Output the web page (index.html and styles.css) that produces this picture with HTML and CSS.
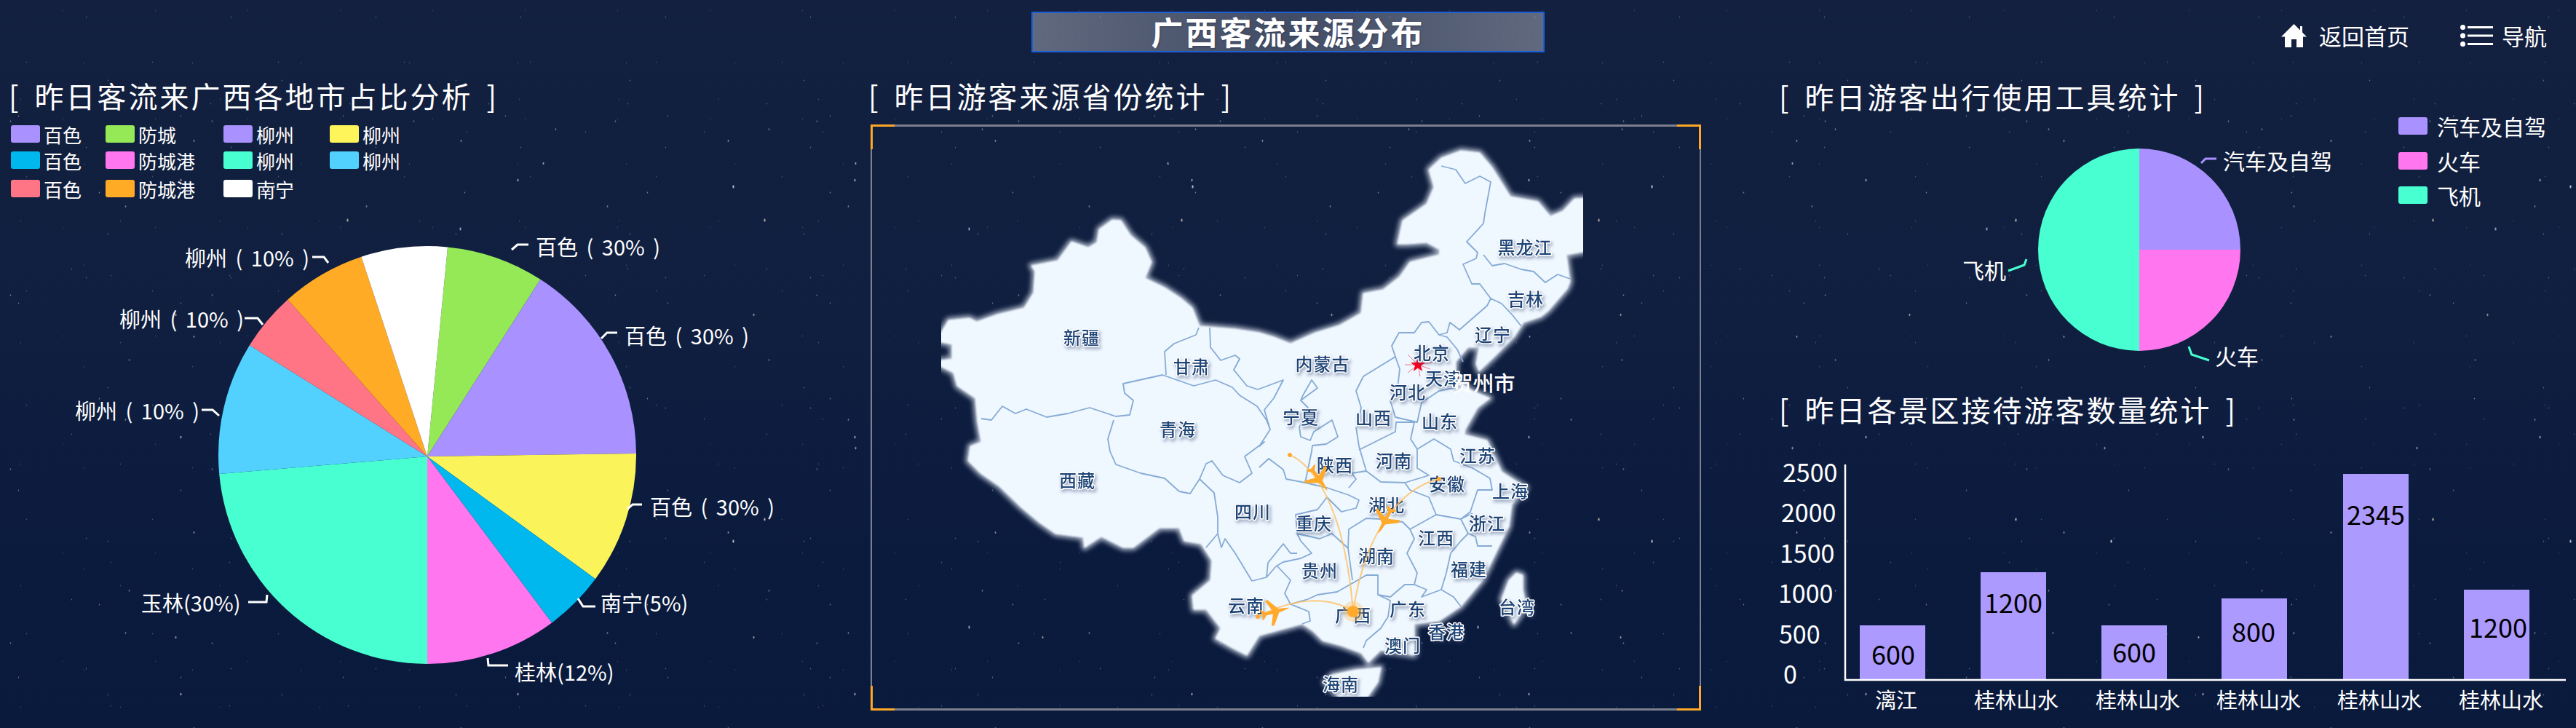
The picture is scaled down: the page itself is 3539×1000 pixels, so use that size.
FILE: index.html
```html
<!DOCTYPE html>
<html lang="zh-CN">
<head>
<meta charset="utf-8">
<title>广西客流来源分布</title>
<link rel="stylesheet" href="styles.css">
</head>
<body>
<div class="screen">
  <header class="top">
    <h1 class="banner">广西客流来源分布</h1>
    <nav class="nav">
      <a class="nav-item">
        <svg class="home-icon" viewBox="0 0 35 32"><path d="M17.5 0 L26 8.5 V3 H29 V11.5 L35 17.5 H30 V32 H21 V21 H14 V32 H5 V17.5 H0 Z"/></svg>
        <span>返回首页</span>
      </a>
      <a class="nav-item nav-menu">
        <svg class="list-icon" viewBox="0 0 45 30"><circle cx="3.5" cy="3.5" r="3.5"/><circle cx="3.5" cy="15" r="3.5"/><circle cx="3.5" cy="26.5" r="3.5"/><rect x="10" y="2" width="35" height="3"/><rect x="10" y="13.500" width="35" height="3"/><rect x="10" y="25" width="35" height="3"/></svg>
        <span>导航</span>
      </a>
    </nav>
  </header>

  <main class="cols">
    <section class="col col-left">
      <h2 class="sec-title">[ 昨日客流来广西各地市占比分析 ]</h2>
      <ul class="legend-grid">
        <li class="lg"><i class="sw c-purple"></i>百色</li>
        <li class="lg"><i class="sw c-green"></i>防城</li>
        <li class="lg"><i class="sw c-purple"></i>柳州</li>
        <li class="lg"><i class="sw c-yellow"></i>柳州</li>
        <li class="lg"><i class="sw c-blue"></i>百色</li>
        <li class="lg"><i class="sw c-pink"></i>防城港</li>
        <li class="lg"><i class="sw c-teal"></i>柳州</li>
        <li class="lg"><i class="sw c-sky"></i>柳州</li>
        <li class="lg"><i class="sw c-red"></i>百色</li>
        <li class="lg"><i class="sw c-orange"></i>防城港</li>
        <li class="lg"><i class="sw c-white"></i>南宁</li>
      </ul>
      <svg class="pie-left" viewBox="0 280 1180 720">
        <path class="f-green" d="M587 627 L615 339.400 A287 287 0 0 1 742.500 383.800 Z"/>
        <path class="f-purple" d="M587 627 L742.500 383.800 A287 287 0 0 1 874 623 Z"/>
        <path class="f-yellow" d="M587 627 L874 623 A287 287 0 0 1 818 795.300 Z"/>
        <path class="f-blue" d="M587 627 L818 795.300 A287 287 0 0 1 758.100 855.400 Z"/>
        <path class="f-pink" d="M587 627 L758.100 855.400 A287 287 0 0 1 587 912 Z"/>
        <path class="f-teal" d="M587 627 L587 912 A287 287 0 0 1 301.200 651 Z"/>
        <path class="f-sky" d="M587 627 L301.200 651 A287 287 0 0 1 342.800 474.200 Z"/>
        <path class="f-red" d="M587 627 L342.800 474.200 A287 287 0 0 1 395.300 411.400 Z"/>
        <path class="f-orange" d="M587 627 L395.300 411.400 A287 287 0 0 1 496.400 352.700 Z"/>
        <path class="f-white" d="M587 627 L496.400 352.700 A287 287 0 0 1 615 339.400 Z"/>
        <g class="lead">
          <polyline points="703,343 711,336 726,336"/>
          <polyline points="826,465 834,457 848,457"/>
          <polyline points="862,699 869,693 882,693"/>
          <polyline points="794,822 801,833 818,833"/>
          <polyline points="670,904 671,914 698,914"/>
          <polyline points="367,817 366,827 341,827"/>
          <polyline points="301,571 292,563 277,563"/>
          <polyline points="361,446 354,437 336,437"/>
          <polyline points="451,361 445,353 429,353"/>
        </g>
        <g class="pie-text">
          <text x="736" y="338">百色 ( 30% )</text>
          <text x="858" y="460">百色 ( 30% )</text>
          <text x="893" y="695">百色 ( 30% )</text>
          <text x="825" y="827">南宁(5%)</text>
          <text x="707" y="922">桂林(12%)</text>
          <text x="194" y="827">玉林(30%)</text>
          <text x="103" y="563">柳州 ( 10% )</text>
          <text x="164" y="437">柳州 ( 10% )</text>
          <text x="254" y="353">柳州 ( 10% )</text>
        </g>
      </svg>
    </section>

    <section class="col col-center">
      <h2 class="sec-title sec-title-center">[ 昨日游客来源省份统计 ]</h2>
      <div class="frame">
        <i class="corner tl"></i><i class="corner tr"></i><i class="corner bl"></i><i class="corner br"></i>
        <svg class="map" viewBox="1196 171 1141 805">
          <defs>
            <clipPath id="mapclip"><rect x="1293" y="180" width="882" height="777"/></clipPath>
            <path id="china" d="M1293 457 L1303 440 L1332 437 L1342 442 L1370 432 L1407 423 L1420 402 L1422 373 L1417 365 L1453 358 L1472 332 L1495 340 L1507 333 L1510 315 L1528 302 L1540 303 L1553 323 L1573 340 L1582 360 L1573 382 L1600 395 L1623 410 L1638 423 L1648 448 L1697 452 L1730 457 L1750 463 L1773 472 L1807 457 L1840 447 L1870 430 L1873 403 L1900 398 L1923 380 L1937 360 L1977 350 L1978 343 L1960 333 L1933 335 L1920 335 L1927 303 L1960 280 L1970 257 L1963 233 L1980 217 L2007 207 L2033 210 L2050 230 L2075 270 L2113 277 L2130 297 L2147 290 L2163 273 L2190 272 L2190 343 L2152 350 L2157 387 L2153 397 L2127 427 L2117 435 L2093 443 L2080 463 L2053 490 L2032 510 L2028 500 L2032 477 L2017 477 L2000 497 L2000 510 L1995 525 L2010 528 L2023 537 L2047 547 L2030 560 L2013 590 L2012 597 L2043 605 L2063 648 L2097 670 L2077 693 L2073 723 L2050 770 L2037 797 L2007 833 L1977 853 L1943 857 L1943 900 L1897 893 L1880 910 L1870 897 L1843 887 L1817 880 L1804 867 L1789 857 L1752 867 L1730 873 L1713 900 L1693 890 L1670 877 L1677 863 L1657 837 L1640 837 L1638 818 L1663 797 L1665 770 L1650 747 L1627 743 L1620 725 L1593 725 L1557 752 L1543 752 L1513 737 L1490 752 L1488 738 L1450 733 L1427 717 L1403 697 L1373 668 L1347 650 L1330 633 L1333 613 L1348 607 L1343 580 L1340 547 L1315 530 L1310 512 L1280 497 L1308 493 L1308 473 L1280 467 Z M2083 787 L2092 790 L2092 810 L2097 833 L2080 857 L2063 823 L2073 797 Z M1897 917 L1893 937 L1870 970 L1850 970 L1820 937 L1830 927 L1863 920 Z"/>
          </defs>
          <g clip-path="url(#mapclip)">
            <use href="#china" class="map-glow"/>
            <use href="#china" class="map-fill"/>
            <path class="borders" d="M1348 575 L1362 577 L1377 558 L1395 568 L1410 562 L1438 573 L1467 568 L1497 560 L1533 572 L1552 570 L1557 550 L1545 540 L1543 527 L1597 515 L1640 530 L1670 522 L1693 532 L1703 543 L1727 558 L1740 577 L1745 590 L1730 613 L1737 607 L1710 627 L1720 650 L1703 663 L1680 653 L1665 633 L1657 637 L1648 658 L1635 678 L1620 675 L1600 657 L1567 650 L1533 638 L1525 620 L1522 603 L1530 577
              M1647 450 L1643 460 L1613 472 L1600 483 L1602 515
              M1662 450 L1663 477 L1677 495 L1697 488 L1703 493 L1695 508 L1713 530 L1728 535 L1763 522 L1750 547 L1737 563 L1745 590
              M1648 658 L1668 677 L1673 710 L1673 733 L1657 752
              M1673 733 L1678 752 L1683 740 L1697 760 L1720 798 L1740 793 L1753 778 L1763 772 L1787 767 L1802 760 L1787 743 L1782 733 L1813 740 L1830 733 L1852 753 L1853 727 L1877 712 L1897 713 L1927 717 L1937 727 L1973 707 L2007 713 L2023 705
              M1730 642 L1743 630 L1763 645 L1767 658 L1793 663 L1823 670 L1853 680 L1867 687 L1863 698 L1843 703 L1823 683 L1810 700 L1780 707 L1782 733
              M1793 663 L1802 620 L1803 612 L1822 610 L1838 600 L1830 577 L1805 593 L1800 605 L1787 600 L1785 587 L1797 560 L1787 550 L1810 533 L1802 522 L1790 543 L1787 550
              M1740 793 L1742 773 L1763 747 L1773 760 L1782 760
              M1863 587 L1867 613 L1877 647 L1857 650 L1863 658 L1853 670
              M1867 618 L1917 593 L1918 580 L1943 580 L1938 603 L1947 617 L1947 643 L1963 653 L1930 663 L1897 662 L1877 647
              M1930 663 L1937 673 L1963 683 L1973 707
              M1947 617 L1970 603 L1993 617 L1997 633 L2023 643 L2047 657 L2050 673 L2030 673 L2020 703 L2007 713 L2017 733 L2007 743 L1993 760 L1987 787 L1980 810
              M1937 727 L1943 740 L1933 760 L1947 787 L1943 803 L1960 810 L1953 820 L1980 810 L1997 820 L2007 833
              M2017 733 L2027 737 L2030 750 L2050 750
              M1943 803 L1930 803 L1910 820 L1893 817 L1893 790 L1877 790 L1860 800 L1837 813 L1810 817 L1797 823 L1773 830 L1765 815 L1773 797 L1755 778
              M1893 817 L1910 825 L1907 847 L1897 863 L1877 880 L1873 890
              M1773 830 L1798 840 L1800 853 L1789 857
              M1853 727 L1852 753 L1858 797
              M1980 228 L2000 233 L2013 252 L2033 242 L2048 250 L2040 293 L2038 307 L2015 332 L2030 347 L2028 355 L2010 363 L2022 390 L2033 390 L2048 410 L2043 420 L2005 453 L1992 443 L1988 457 L1977 460 L1963 442 L1953 443 L1943 457 L1922 457 L1912 475 L1917 490 L1873 517 L1863 537 L1870 560 L1865 587
              M2038 350 L2050 365 L2067 362 L2090 370 L2107 373 L2123 388 L2140 377 L2157 383
              M2048 410 L2063 417 L2078 433 L2090 448
              M1917 490 L1923 507 L1920 533 L1910 550 L1917 573 L1947 580 L1953 553 L1977 537 L1997 533
              M1977 460 L1988 463 L2002 480 L2010 497"/>
          </g>
          <g class="rays">
            <path d="M1948 501 L1934 487 M1948 501 L1930 501 M1948 501 L1934 512 M1948 501 L1951 517 M1948 501 L1965 507 M1948 501 L1968 498 M1948 501 L1962 490"/>
          </g>
          <polygon class="star" points="1948,491 1950.400,498 1958,498 1952,502.500 1954.200,510 1948,505.500 1941.800,510 1944,502.500 1938,498 1945.600,498"/>
          <g class="prov">
            <text x="1486" y="462">新疆</text><text x="1637" y="502">甘肃</text><text x="1618" y="588">青海</text><text x="1480" y="658">西藏</text><text x="1721" y="701">四川</text><text x="1712" y="830">云南</text>
            <text x="2095" y="338">黑龙江</text><text x="2096" y="409">吉林</text><text x="2051" y="458">辽宁</text><text x="1967" y="483">北京</text><text x="1817" y="498">内蒙古</text><text x="1983" y="518">天津</text><text x="1934" y="537">河北</text>
            <text x="1787" y="571">宁夏</text><text x="1887" y="572">山西</text><text x="1978" y="577">山东</text><text x="1834" y="637">陕西</text><text x="1915" y="631">河南</text><text x="2030" y="624">江苏</text><text x="1988" y="663">安徽</text><text x="2075" y="673">上海</text>
            <text x="1905" y="692">湖北</text><text x="1805" y="717">重庆</text><text x="2043" y="717">浙江</text><text x="1973" y="737">江西</text><text x="1891" y="762">湖南</text><text x="2018" y="780">福建</text><text x="1813" y="782">贵州</text>
            <text x="1934" y="835">广东</text><text x="2084" y="832">台湾</text><text x="1859" y="843">广西</text><text x="1987" y="866">香港</text><text x="1927" y="885">澳门</text><text x="1842" y="938">海南</text>
          </g>
          <g class="routes">
            <path d="M1772 625 C1790 632 1845 670 1859 840"/>
            <path d="M1977 658 C1925 670 1875 730 1859 840"/>
            <path d="M1728 847 C1770 825 1820 815 1859 840"/>
          </g>
          <circle class="halo" cx="1859" cy="840" r="14"/>
          <g class="dots">
            <circle cx="1859" cy="840" r="8"/>
            <circle cx="1772" cy="625" r="3"/>
            <circle cx="1977" cy="658" r="3"/>
            <circle cx="1728" cy="847" r="3"/>
          </g>
          <g class="planes">
            <path transform="translate(1812 658) rotate(54)" d="M20 0 C16 -1.500 10 -2 5 -2.500 L-6 -18 L-10 -18 L-4 -2.500 L-13 -2 L-18 -7 L-20 -7 L-18 0 L-20 7 L-18 7 L-13 2 L-4 2.500 L-10 18 L-6 18 L5 2.500 C10 2 16 1.500 20 0 Z"/>
            <path transform="translate(1903 715) rotate(118)" d="M20 0 C16 -1.500 10 -2 5 -2.500 L-6 -18 L-10 -18 L-4 -2.500 L-13 -2 L-18 -7 L-20 -7 L-18 0 L-20 7 L-18 7 L-13 2 L-4 2.500 L-10 18 L-6 18 L5 2.500 C10 2 16 1.500 20 0 Z"/>
            <path transform="translate(1752 840) rotate(-15)" d="M20 0 C16 -1.500 10 -2 5 -2.500 L-6 -18 L-10 -18 L-4 -2.500 L-13 -2 L-18 -7 L-20 -7 L-18 0 L-20 7 L-18 7 L-13 2 L-4 2.500 L-10 18 L-6 18 L5 2.500 C10 2 16 1.500 20 0 Z"/>
          </g>
          <text class="city" x="2038" y="525">贺州市</text>
        </svg>
      </div>
    </section>

    <section class="col col-right">
      <h2 class="sec-title sec-title-right">[ 昨日游客出行使用工具统计 ]</h2>
      <div class="tools">
        <svg class="pie-right" viewBox="2447 160 840 377">
          <path class="f-purple" d="M2939 343 V204 A139 139 0 0 1 3078 343 Z"/>
          <path class="f-pink" d="M2939 343 H3078 A139 139 0 0 1 2939 482 Z"/>
          <path class="f-teal" d="M2939 482 A139 139 0 0 1 2939 204 Z"/>
          <polyline class="lead-purple" points="3024,224 3030,218 3045,218"/>
          <polyline class="lead-teal" points="3007,476 3011,487 3035,495"/>
          <polyline class="lead-teal" points="2784,356 2781,364 2759,372"/>
          <g class="pie-text pie-text-big">
            <text x="3054" y="220">汽车及自驾</text>
            <text x="3043" y="488">火车</text>
            <text x="2696" y="370">飞机</text>
          </g>
        </svg>
        <ul class="legend-col">
          <li class="lg lg-big"><i class="sw c-purple"></i>汽车及自驾</li>
          <li class="lg lg-big"><i class="sw c-pink"></i>火车</li>
          <li class="lg lg-big"><i class="sw c-teal"></i>飞机</li>
        </ul>
      </div>
      <h2 class="sec-title sec-title-right">[ 昨日各景区接待游客数量统计 ]</h2>
      <svg class="bars" viewBox="2440 587 1099 413">
        <g class="bar">
          <rect x="2555" y="859" width="90" height="75"/>
          <rect x="2721" y="786" width="90" height="148"/>
          <rect x="2887" y="859" width="90" height="75"/>
          <rect x="3052" y="822" width="90" height="112"/>
          <rect x="3219" y="651" width="90" height="283"/>
          <rect x="3385" y="810" width="90" height="124"/>
        </g>
        <path class="axis" d="M2535 638 V934 H3525"/>
        <g class="y-text">
          <text x="2449" y="647">2500</text>
          <text x="2447" y="702">2000</text>
          <text x="2445" y="758">1500</text>
          <text x="2443" y="813">1000</text>
          <text x="2444" y="869">500</text>
          <text x="2450" y="924">0</text>
        </g>
        <g class="val-text">
          <text x="2601" y="897">600</text>
          <text x="2766" y="826">1200</text>
          <text x="2932" y="894">600</text>
          <text x="3096" y="866">800</text>
          <text x="3264" y="705">2345</text>
          <text x="3432" y="860">1200</text>
        </g>
        <g class="x-text">
          <text x="2605" y="960">漓江</text>
          <text x="2770" y="960">桂林山水</text>
          <text x="2937" y="960">桂林山水</text>
          <text x="3103" y="960">桂林山水</text>
          <text x="3269" y="960">桂林山水</text>
          <text x="3436" y="960">桂林山水</text>
        </g>
      </svg>
    </section>
  </main>
</div>
</body>
</html>
```
FILE: styles.css
```css
* { box-sizing: border-box; }
html, body { margin: 0; padding: 0; }
body {
  width: 3539px;
  height: 1000px;
  overflow: hidden;
  background: #0d1c3e;
  font-family: "Noto Sans CJK SC", "Noto Sans", sans-serif;
  color: #fff;
}
.screen {
  position: relative;
  width: 3539px;
  height: 1000px;
  overflow: hidden;
  background-color: #0e1d3f;
  background-image:
    radial-gradient(1.8px 3px at 50% 50%, rgba(255,255,255,.9), transparent),
    radial-gradient(1.8px 3px at 50% 50%, rgba(255,230,200,.85), transparent),
    radial-gradient(1.8px 3px at 50% 50%, rgba(170,215,255,.9), transparent),
    radial-gradient(1.6px 2.6px at 50% 50%, rgba(255,255,255,.75), transparent),
    radial-gradient(1.6px 2.6px at 50% 50%, rgba(200,225,255,.75), transparent),
    radial-gradient(1.6px 2.4px at 50% 50%, rgba(255,240,220,.7), transparent),
    radial-gradient(1.4px 2.2px at 50% 50%, rgba(255,255,255,.6), transparent),
    radial-gradient(1.4px 2.2px at 50% 50%, rgba(180,210,240,.6), transparent),
    radial-gradient(1.3px 2px at 50% 50%, rgba(255,255,255,.5), transparent),
    radial-gradient(1.3px 2px at 50% 50%, rgba(190,215,245,.5), transparent),
    radial-gradient(1.2px 1.8px at 50% 50%, rgba(255,255,255,.42), transparent),
    radial-gradient(1.2px 1.8px at 50% 50%, rgba(170,200,240,.42), transparent),
    radial-gradient(1.2px 1.8px at 50% 50%, rgba(255,255,255,.36), transparent),
    radial-gradient(1.2px 1.8px at 50% 50%, rgba(180,205,240,.36), transparent),
    radial-gradient(1.1px 1.6px at 50% 50%, rgba(255,255,255,.3), transparent),
    radial-gradient(1.1px 1.6px at 50% 50%, rgba(180,205,240,.3), transparent),
    radial-gradient(1.1px 1.6px at 50% 50%, rgba(255,255,255,.26), transparent),
    radial-gradient(1.1px 1.6px at 50% 50%, rgba(180,205,240,.26), transparent),
    radial-gradient(1px 1.5px at 50% 50%, rgba(255,255,255,.22), transparent),
    radial-gradient(1px 1.5px at 50% 50%, rgba(180,205,240,.22), transparent),
    linear-gradient(180deg, #13203f 0%, #101f40 45%, #0b1b3e 75%, #0a1a3c 100%);
  background-size:
    631px 487px, 573px 411px, 699px 547px, 463px 353px,
    429px 391px, 397px 443px, 367px 269px, 331px 293px,
    293px 317px, 277px 239px, 251px 283px, 239px 211px,
    223px 257px, 199px 179px, 191px 227px, 173px 157px,
    163px 197px, 149px 139px, 137px 167px, 127px 149px,
    100% 100%;
  background-position:
    61px 13px, 191px 97px, 283px 41px, 17px 71px,
    103px 29px, 43px 211px, 83px 59px, 7px 137px,
    31px 19px, 153px 47px, 11px 123px, 29px 5px,
    137px 31px, 19px 113px, 3px 29px, 123px 7px,
    71px 83px, 41px 17px, 97px 53px, 23px 89px,
    0 0;
}
.top {
  display: grid;
  grid-template-columns: 1417px 705px 1fr;
  grid-template-areas: ". ban nav";
  height: 106px;
  padding-top: 16px;
}
.banner {
  grid-area: ban;
  margin: 0;
  height: 56px;
  border: 2px solid #1c5fd6;
  background: linear-gradient(90deg, rgba(255,255,255,.33) 0%, rgba(255,255,255,.28) 18%, rgba(255,255,255,.2) 50%, rgba(255,255,255,.3) 90%, rgba(255,255,255,.33) 100%);
  font-size: 44px;
  font-weight: 700;
  line-height: 50px;
  letter-spacing: 3px;
  text-align: center;
  text-shadow: 1px 1px 2px rgba(40,50,80,.6);
}
.nav {
  grid-area: nav;
  display: flex;
  justify-content: flex-end;
  align-items: flex-start;
  gap: 70px;
  padding: 15px 40px 0 0;
}
.nav-item {
  display: flex;
  align-items: center;
  gap: 17px;
  font-size: 31px;
  line-height: 36px;
  color: #fff;
}
.nav-menu { gap: 12px; }
.home-icon { width: 35px; height: 32px; fill: #fff; }
.list-icon { width: 45px; height: 30px; fill: #fff; }

.cols {
  display: grid;
  grid-template-columns: 1196px 1141px 1fr;
  height: 894px;
}
.col { min-width: 0; }
.col-left { padding-left: 12px; }
.col-right { padding: 1px 0 0 110px; display: flex; flex-direction: column; }
.sec-title {
  margin: 0;
  height: 50px;
  font-size: 40px;
  font-weight: 400;
  line-height: 50px;
  letter-spacing: 3px;
  word-spacing: 7px;
  white-space: pre;
}
.sec-title-center { margin-left: -3px; }
.sec-title-right { margin-left: -3px; }

.legend-grid {
  list-style: none;
  margin: 16px 0 0 3px;
  padding: 0;
  display: grid;
  grid-template-columns: 130px 162px 146px 120px;
  grid-template-rows: 36px 39px 30px;
}
.lg {
  display: flex;
  align-items: flex-start;
  gap: 5px;
  font-size: 26px;
  line-height: 25px;
}
.sw {
  display: block;
  width: 40px;
  height: 24px;
  border-radius: 3px;
  flex: none;
}
.c-purple { background: #a992ff; }
.c-green { background: #95e856; }
.c-yellow { background: #fdf55a; }
.c-blue { background: #00b7ee; }
.c-pink { background: #ff76ee; }
.c-teal { background: #48ffd2; }
.c-sky { background: #52d1ff; }
.c-red { background: #ff7586; }
.c-orange { background: #ffab26; }
.c-white { background: #fff; }

.f-purple { fill: #a992ff; }
.f-green { fill: #95e856; }
.f-yellow { fill: #fbf35a; }
.f-blue { fill: #00b7ee; }
.f-pink { fill: #ff76ee; }
.f-teal { fill: #48ffd2; }
.f-sky { fill: #52d1ff; }
.f-red { fill: #ff7586; }
.f-orange { fill: #ffab26; }
.f-white { fill: #fff; }

.pie-left {
  position: absolute;
  left: 0;
  top: 280px;
  width: 1180px;
  height: 720px;
}
.lead polyline { fill: none; stroke: #fff; stroke-width: 3; }
.lead-purple, .lead-teal { fill: none; stroke-width: 3; }
.lead-purple { stroke: #a992ff; }
.lead-teal { stroke: #48ffd2; }
.pie-text text {
  fill: #fff;
  font-size: 29px;
  word-spacing: 5px;
  dominant-baseline: central;
}
.pie-text-big text { font-size: 30px; }

.frame {
  position: relative;
  margin-top: 15px;
  width: 1141px;
  height: 805px;
  border-style: solid;
  border-color: #7c808c;
  border-width: 3px 2px;
}
.corner { position: absolute; width: 33px; height: 34px; border: 0 solid #ffa726; z-index: 2; }
.tl { left: -2px; top: -3px; border-width: 3px 0 0 3px; }
.tr { right: -2px; top: -3px; border-width: 3px 3px 0 0; }
.bl { left: -2px; bottom: -3px; border-width: 0 0 3px 3px; }
.br { right: -2px; bottom: -3px; border-width: 0 3px 3px 0; }
.map {
  position: absolute;
  left: -2px;
  top: -3px;
  width: 1141px;
  height: 805px;
}
.map-glow { fill: #a9b3c4; stroke: #a9b3c4; stroke-width: 8; stroke-linejoin: round; filter: blur(3px); }
.map-fill { fill: #eff7ff; stroke: #eff7ff; stroke-width: 1; stroke-linejoin: round; filter: blur(.8px); }
.borders { fill: none; stroke: #86abd4; stroke-width: 1.800; stroke-linejoin: round; }
.rays path { fill: none; stroke: #f07a90; stroke-width: 1; }
.star { fill: #f5001e; }
.prov { filter: drop-shadow(2px 3px 2px rgba(50,70,110,.4)); }
.prov text {
  fill: #1f4577;
  font-size: 24px;
  font-weight: 500;
  letter-spacing: 1px;
  text-anchor: middle;
  dominant-baseline: central;
  paint-order: stroke;
  stroke: #fff;
  stroke-width: 3px;
  stroke-linejoin: round;
}
.routes path { fill: none; stroke: #ffbf5e; stroke-width: 2; opacity: .8; }
.halo { fill: rgba(255,190,90,.35); }
.dots circle, .planes path { fill: #ffaa2b; }
.city {
  fill: #fff;
  font-size: 29px;
  font-weight: 500;
  text-anchor: middle;
  dominant-baseline: central;
}

.tools {
  display: flex;
  height: 380px;
  padding-top: 3px;
}
.pie-right { width: 840px; height: 377px; flex: none; }
.legend-col {
  list-style: none;
  margin: 1px 0 0 8px;
  padding: 0;
  display: flex;
  flex-direction: column;
  gap: 23.500px;
}
.lg-big { font-size: 30px; line-height: 24px; gap: 13px; }
.bars { width: 1099px; height: 413px; margin-left: -7px; flex: none; }
.bar rect { fill: #ac9aff; }
.axis { fill: none; stroke: #fff; stroke-width: 2.500; }
.y-text text {
  fill: #fff;
  font-size: 34px;
  dominant-baseline: central;
}
.val-text text {
  fill: #000;
  font-size: 36px;
  text-anchor: middle;
  dominant-baseline: central;
}
.x-text text {
  fill: #fff;
  font-size: 29px;
  text-anchor: middle;
  dominant-baseline: central;
}
```
